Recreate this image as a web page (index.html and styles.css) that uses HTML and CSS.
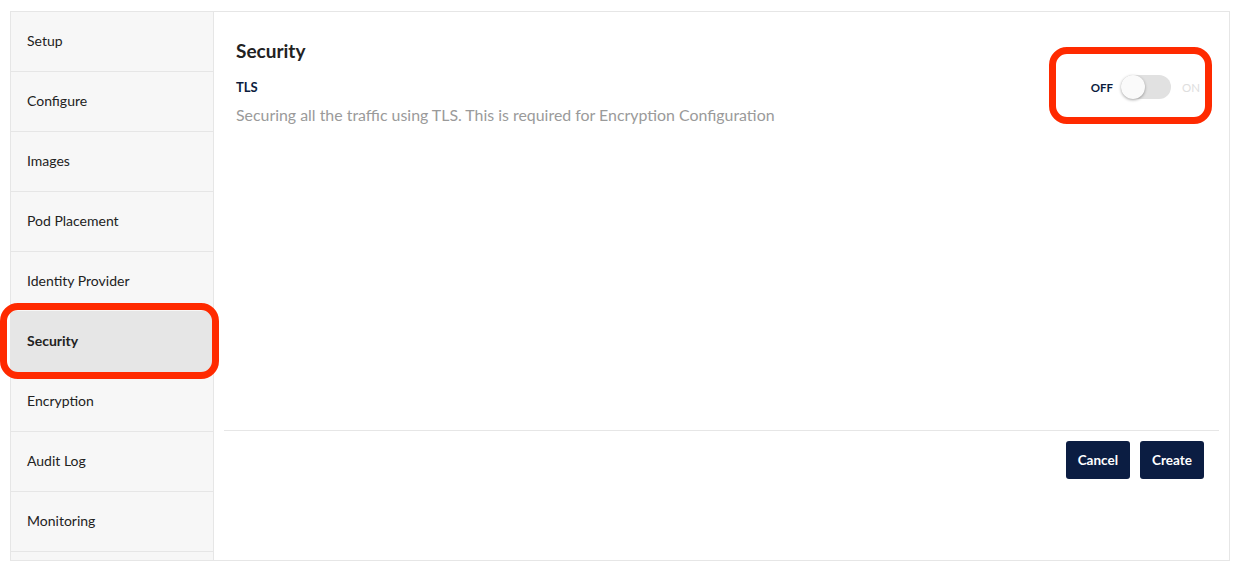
FILE: index.html
```html
<!DOCTYPE html>
<html>
<head>
<meta charset="utf-8">
<link rel="stylesheet" href="styles.css">
</head>
<body>
<div class="frame">
  <nav class="sidebar">
    <div class="nav-item">Setup</div>
    <div class="nav-item">Configure</div>
    <div class="nav-item">Images</div>
    <div class="nav-item">Pod Placement</div>
    <div class="nav-item">Identity Provider</div>
    <div class="nav-item active">Security</div>
    <div class="nav-item">Encryption</div>
    <div class="nav-item">Audit Log</div>
    <div class="nav-item">Monitoring</div>
  </nav>
  <main class="main">
    <div class="content">
      <h2 class="title">Security</h2>
      <div class="row">
        <div class="info">
          <div class="label">TLS</div>
          <div class="desc">Securing all the traffic using TLS. This is required for Encryption Configuration</div>
        </div>
        <div class="toggle">
          <span class="off">OFF</span>
          <span class="track"><span class="knob"></span></span>
          <span class="on">ON</span>
        </div>
      </div>
    </div>
    <div class="footer">
      <button class="btn">Cancel</button>
      <button class="btn">Create</button>
    </div>
  </main>
</div>
<div class="mark mark-nav"></div>
<div class="mark mark-toggle"></div>
</body>
</html>
```
FILE: styles.css
```css
* { box-sizing: border-box; }
body {
  margin: 0;
  font-family: Lato, "Liberation Sans", sans-serif;
  background: #fff;
  color: #222;
}
.frame {
  margin: 11px 0 0 10px;
  width: 1220px;
  height: 550px;
  border: 1px solid #e6e6e6;
  display: flex;
}
.sidebar {
  width: 203px;
  flex: none;
  background: #f7f7f7;
  border-right: 1px solid #e6e6e6;
}
.nav-item {
  height: 60px;
  border-bottom: 1px solid #e6e6e6;
  padding: 0 0 2px 16px;
  display: flex;
  align-items: center;
  font-size: 14px;
  color: #222;
}
.nav-item.active {
  background: #e6e6e6;
  font-weight: 700;
}
.main {
  flex: 1;
  display: flex;
  flex-direction: column;
}
.content {
  flex: 1;
  padding: 27px 29px 0 22px;
}
.title {
  margin: 0;
  font-size: 19px;
  line-height: 24px;
  font-weight: 700;
  color: #222;
}
.row {
  display: flex;
  justify-content: space-between;
  align-items: flex-start;
  margin-top: 15px;
}
.label {
  font-size: 13px;
  font-weight: 700;
  line-height: 18px;
  color: #0b1c3d;
}
.desc {
  margin-top: 9px;
  font-size: 15.9px;
  line-height: 20px;
  color: #9a9a9a;
}
.toggle {
  display: flex;
  align-items: center;
  font-size: 11.5px;
  font-weight: 700;
  margin-top: -3px;
}
.off { color: #0b1c3d; margin-right: 8px; }
.on { color: #dedede; font-weight: 400; margin-left: 11px; }
.track {
  width: 50px;
  height: 24px;
  border-radius: 12px;
  background: #e1e1e1;
  position: relative;
}
.knob {
  position: absolute;
  left: 0;
  top: 0;
  width: 24px;
  height: 24px;
  border-radius: 50%;
  background: #fafafa;
  box-shadow: 0 1px 3px rgba(0,0,0,0.35);
}
.footer {
  height: 130px;
  margin: 0 10px;
  border-top: 1px solid #e6e6e6;
  display: flex;
  justify-content: flex-end;
  align-items: flex-start;
  gap: 10px;
  padding: 10px 15px 0 0;
}
.btn {
  height: 38px;
  padding: 0 12px;
  min-width: 64px;
  border: none;
  border-radius: 3px;
  background: #0b1d42;
  color: #fff;
  font-family: Lato, "Liberation Sans", sans-serif;
  font-size: 13.5px;
  font-weight: 700;
}
.mark {
  position: absolute;
  border: 7px solid #ff2a00;
  border-radius: 18px;
}
.mark-nav {
  left: 0;
  top: 303px;
  width: 219px;
  height: 76px;
}
.mark-toggle {
  left: 1049px;
  top: 47px;
  width: 163px;
  height: 77px;
}
```
